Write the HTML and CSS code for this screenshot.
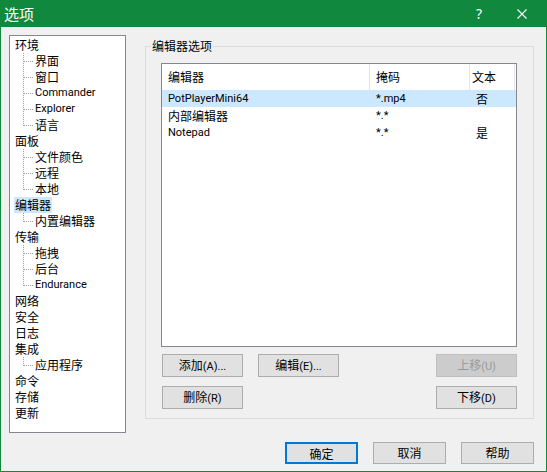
FILE: index.html
```html
<!DOCTYPE html>
<html lang="zh-CN">
<head>
<meta charset="utf-8">
<title>选项</title>
<link rel="stylesheet" href="styles.css">
</head>
<body>
<div class="window">
  <div class="titlebar">
    <span class="title">选项</span>
    <span class="cap-btn help">?</span>
    <span class="cap-btn close">
      <svg width="10" height="10" viewBox="0 0 10 10"><path d="M0.5 0.5 L9.5 9.5 M9.5 0.5 L0.5 9.5" stroke="#fff" stroke-width="1.1" fill="none"/></svg>
    </span>
  </div>
  <div class="content">
    <div class="main">
      <ul class="tree">
        <li><span class="label">环境</span>
          <ul class="children">
            <li>界面</li>
            <li>窗口</li>
            <li class="latin">Commander</li>
            <li class="latin">Explorer</li>
            <li class="last">语言</li>
          </ul>
        </li>
        <li><span class="label">面板</span>
          <ul class="children">
            <li>文件颜色</li>
            <li>远程</li>
            <li class="last">本地</li>
          </ul>
        </li>
        <li><span class="label selected">编辑器</span>
          <ul class="children">
            <li class="last">内置编辑器</li>
          </ul>
        </li>
        <li><span class="label">传输</span>
          <ul class="children">
            <li>拖拽</li>
            <li>后台</li>
            <li class="last latin">Endurance</li>
          </ul>
        </li>
        <li><span class="label">网络</span></li>
        <li><span class="label">安全</span></li>
        <li><span class="label">日志</span></li>
        <li><span class="label">集成</span>
          <ul class="children">
            <li class="last">应用程序</li>
          </ul>
        </li>
        <li><span class="label">命令</span></li>
        <li><span class="label">存储</span></li>
        <li><span class="label">更新</span></li>
      </ul>

      <fieldset class="group">
        <legend class="group-title">编辑器选项</legend>
        <div class="list">
          <div class="list-header">
            <div class="hcell">编辑器</div>
            <div class="hcell">掩码</div>
            <div class="hcell narrow">文本</div>
          </div>
          <div class="row selected-row">
            <div class="cell latin">PotPlayerMini64</div>
            <div class="cell latin">*.mp4</div>
            <div class="cell">否</div>
          </div>
          <div class="row">
            <div class="cell">内部编辑器</div>
            <div class="cell latin">*.*</div>
            <div class="cell"></div>
          </div>
          <div class="row">
            <div class="cell latin">Notepad</div>
            <div class="cell latin">*.*</div>
            <div class="cell">是</div>
          </div>
        </div>
        <div class="actions">
          <button class="btn">添加<span class="lt">(A)...</span></button>
          <button class="btn">编辑<span class="lt">(E)...</span></button>
          <button class="btn disabled col4">上移<span class="lt">(U)</span></button>
          <button class="btn">删除<span class="lt">(R)</span></button>
          <button class="btn col4">下移<span class="lt">(D)</span></button>
        </div>
      </fieldset>
    </div>
    <div class="footer">
      <button class="btn dlg default">确定</button>
      <button class="btn dlg">取消</button>
      <button class="btn dlg">帮助</button>
    </div>
  </div>
</div>
</body>
</html>
```
FILE: styles.css
```css
* { box-sizing: border-box; }
html, body { margin: 0; padding: 0; }
body {
  width: 547px;
  height: 472px;
  font-family: "Noto Sans CJK SC", "Noto Sans", sans-serif;
  font-size: 12px;
  color: #000;
  background: #f0f0f0;
  overflow: hidden;
}
.latin, .lt {
  font-family: Roboto, "Noto Sans", sans-serif;
  font-size: 11px;
}
.window {
  width: 547px;
  height: 472px;
  background: #10893e;
  padding: 0 1px 1px;
  display: flex;
  flex-direction: column;
}
.titlebar {
  height: 27px;
  display: flex;
  align-items: center;
  color: #fff;
  padding: 0 1px 0 3px;
}
.title {
  flex: 1;
  font-size: 15px;
  line-height: 27px;
}
.cap-btn {
  display: flex;
  align-items: center;
  justify-content: center;
  height: 27px;
}
.help { width: 40px; font-size: 14px; font-family: "Noto Sans", sans-serif; }
.close { width: 46px; }

.content {
  flex: 1;
  background: #f0f0f0;
  padding: 8px 12px 7px 8px;
  display: flex;
  flex-direction: column;
}
.main {
  display: flex;
  align-items: flex-start;
  gap: 19px;
  height: 398px;
}

/* tree */
.tree {
  width: 117px;
  height: 398px;
  margin: 0;
  padding: 1px 0 0 5px;
  list-style: none;
  background: #fff;
  border: 1px solid #828790;
  line-height: 16px;
  flex: none;
}
.tree li { list-style: none; }
.label { display: inline-block; height: 16px; }
.label.selected {
  background: #cce8ff;
  margin-left: -1px;
  padding: 0 1px;
}
.children { margin: 0; padding: 0; }
.children li {
  height: 16px;
  line-height: 16px;
  padding-left: 20px;
  background:
    repeating-linear-gradient(to right, #a0a0a0 0 1px, transparent 1px 2px) 9px 8px / 10px 1px no-repeat,
    repeating-linear-gradient(to bottom, #a0a0a0 0 1px, transparent 1px 2px) 8px 0 / 1px 100% no-repeat;
}
.children li.last {
  background:
    repeating-linear-gradient(to right, #a0a0a0 0 1px, transparent 1px 2px) 9px 8px / 10px 1px no-repeat,
    repeating-linear-gradient(to bottom, #a0a0a0 0 1px, transparent 1px 2px) 8px 0 / 1px 9px no-repeat;
}

/* group */
.group {
  margin: 3px 0 0 0;
  width: 389px;
  border: 1px solid #dcdcdc;
  padding: 9px 16px 9px 15px;
  min-width: 0;
}
.group-title {
  padding: 0 1px;
  margin-left: -10px;
  line-height: 16px;
  font-size: 12px;
}
.list {
  width: 356px;
  height: 284px;
  background: #fff;
  border: 1px solid #828790;
}
.list-header, .row {
  display: grid;
  grid-template-columns: 208px 100px 45px;
}
.list-header { height: 26px; }
.hcell {
  border-right: 1px solid #e5e5e5;
  line-height: 26px;
  padding-left: 6px;
  white-space: nowrap;
  overflow: hidden;
}
.hcell.narrow { padding-left: 2px; }
.row { height: 17px; }
.cell {
  line-height: 17px;
  padding-left: 6px;
  white-space: nowrap;
}
.selected-row { background: #cce8ff; }

.actions {
  margin-top: 7px;
  padding-left: 1px;
  display: grid;
  grid-template-columns: 81px 81px 1fr 81px;
  column-gap: 15px;
  row-gap: 9px;
}
.col4 { grid-column: 4; }

.btn {
  height: 23px;
  width: 81px;
  padding: 0;
  margin: 0;
  background: #e1e1e1;
  border: 1px solid #adadad;
  font-family: "Noto Sans CJK SC", "Noto Sans", sans-serif;
  font-size: 12px;
  color: #000;
  line-height: 20px;
}
.btn.disabled {
  background: #cccccc;
  border-color: #bfbfbf;
  color: #9a9a9a;
}
.footer {
  display: flex;
  justify-content: flex-end;
  gap: 15px;
  margin-top: 9px;
}
.btn.dlg {
  width: 73px;
  height: 22px;
}
.btn.default {
  border: 2px solid #0078d7;
}
```
